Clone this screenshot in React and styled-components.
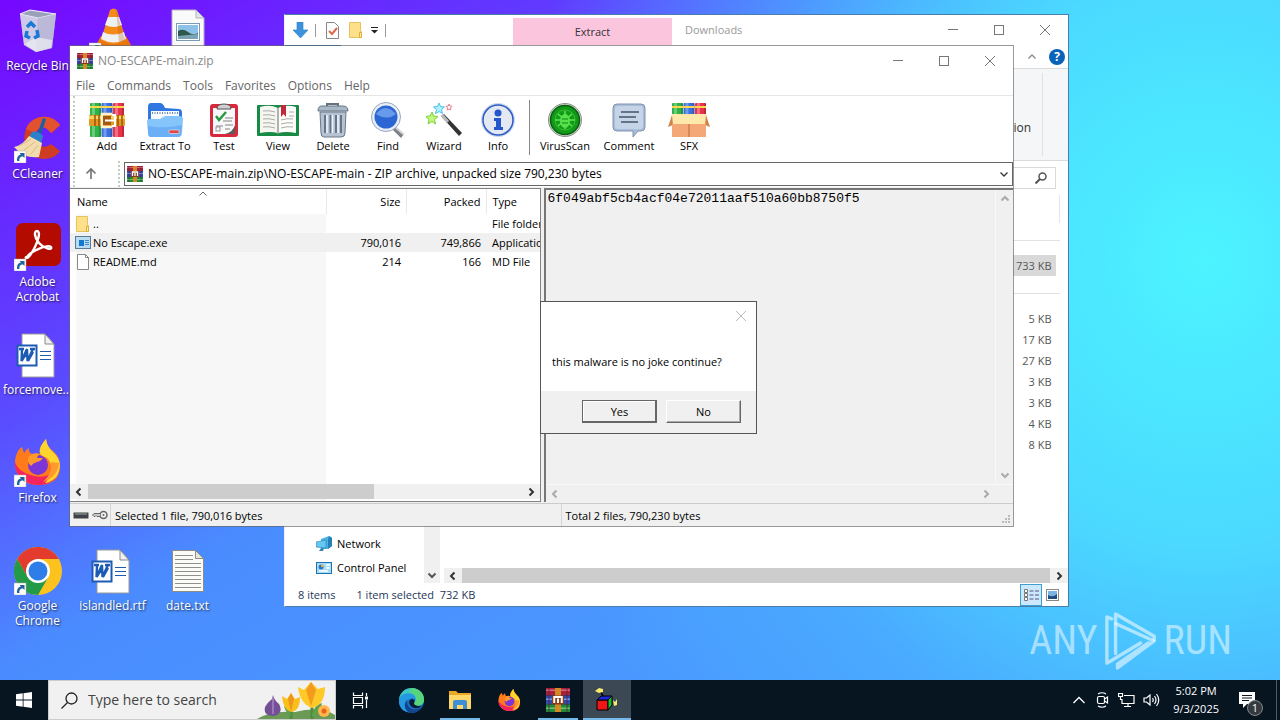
import styled, { createGlobalStyle } from 'styled-components';


const GlobalStyle = createGlobalStyle`
    * {
        box-sizing: border-box;
    }
    body {
        margin: 0;
        font-family: 'Open Sans', 'Noto Sans', sans-serif;
        font-size: 11px;
        line-height: 16px;
        color: #000;
    }
    button, select, input, textarea {
        margin: 0;
        padding: 0;
        border: 0;
        border-radius: 0;
        background: none;
        font: inherit;
        color: inherit;
    }
    svg {
        display: block;
        flex: none;
    }
`

const Screen = styled.div`
    display: flex;
    flex-direction: column;
    min-height: 100vh;
    overflow: hidden;
    background:
        radial-gradient(ellipse 54% 105% at 94% 36%, #4cf4ff 0%, #4bd9ff 38%, #49b4ffaa 68%, #4b90ff00 100%),
        linear-gradient(150deg, #7607ff 0%, #6236ff 20%, #5a4cff 29%, #4a8cff 46%, #4a98ff 70%);
`

const Desktop = styled.main`
    position: relative;
    flex: 1;
    min-height: 680px;
`

/* ---------- desktop shortcuts ---------- */

const Shortcuts = styled.div`
    display: grid;
    grid-template-columns: repeat(3, 75px);
    grid-auto-rows: 108px;
`

const ShortcutBox = styled.button`
    grid-column: ${p => p.$col};
    grid-row: ${p => p.$row};
    display: flex;
    flex-direction: column;
    align-items: center;
    gap: 3px;
    padding-top: 7px;
    color: white;
    font-size: 12px;
    line-height: 15px;
    text-shadow: 1px 1px 2px #000a;
    white-space: nowrap;
    span {
        max-width: 75px;
    }
    .two {
        white-space: normal;
        width: 60px;
    }
`

const Arrow = () => (
    <g>
        <rect x="0" y="36" width="12" height="12" fill="#fff" stroke="#aaa" strokeWidth=".5" />
        <path d="M3 46c0-4 1-6 4-6.500l-1.500-1.500h5v5l-1.500-1.500c-3 0-4 2-3.500 4.500z" fill="#23619f" />
    </g>
)

const Art = ({ children, size = 48, box = 48 }) => (
    <svg width={size} height={size} viewBox={`0 0 ${box} ${box}`} aria-hidden="true">{children}</svg>
)

const RecycleArt = () => (
    <Art>
        <path d="M6 7l10-4 26 4-4 34-16 4-12-7z" fill="#c3c4dc" opacity=".85" />
        <path d="M6 7l10-4 26 4-18 4z" fill="#9aa0b8" stroke="#eef" strokeWidth="1" />
        <path d="M24 11l-2 34-12-7L6 7z" fill="#d8d8ea" opacity=".7" />
        <path d="M24 11l18-4-4 34-16 4z" fill="#bdbcd6" opacity=".8" />
        <path d="M11 37l11-7 16 3-1 8-15 4z" fill="#eeeef4" opacity=".7" />
        <g fill="none" stroke="#1979d6" strokeWidth="3.500">
            <path d="M13 20l4-4 4 4" />
            <path d="M23 23l1 6-4 2" />
            <path d="M16 31l-4-2 1-5" />
        </g>
    </Art>
)

const VlcArt = () => (
    <Art>
        <path d="M6 40l6-11h25l6 11v6H6z" fill="#e8750c" />
        <path d="M21 3q3.500-3 7 0l9 30q-12 8-25 0z" fill="#f58a18" />
        <path d="M19 10h11l3 8q-8 4-17 0z" fill="#eef0f2" />
        <path d="M14 25q10 5 21 0l2 7q-12 7-25 0z" fill="#eef0f2" />
        <path d="M27 2l9 31-6 3z" fill="#a94a00" opacity=".25" />
        <Arrow />
    </Art>
)

const PictureArt = () => (
    <Art>
        <path d="M8 3h24l8 8v37H8z" fill="#fafafa" stroke="#b5b5b5" />
        <path d="M32 3v8h8z" fill="#dfe4e8" stroke="#b5b5b5" />
        <rect x="12.500" y="16.500" width="23" height="17" fill="#fff" stroke="#7a9bb8" />
        <rect x="14" y="18" width="20" height="14" fill="#8cc2e8" />
        <path d="M14 24q5-3 10 1t10 1v6H14z" fill="#31584c" />
        <path d="M14 29l20-2v5H14z" fill="#7aa4b4" />
    </Art>
)

const CCleanerArt = () => (
    <Art>
        <path d="M46 10C38-2 18-1 12 14c-5 14 2 29 17 30 8 0 14-3 17-8l-9-7c-6 5-14 3-15-5-1-7 3-12 9-11 3 0 5 2 7 5z" fill="#cf3c24" />
        <path d="M46 10C38-2 18-1 12 14l9 4c2-5 8-7 12-4l4 4z" fill="#e4512f" />
        <path d="M29 3l3 1-5 16-4-1z" fill="#1c5ea8" />
        <path d="M18 17q6-2 11 4l-2 8-12-7z" fill="#2c81ca" />
        <path d="M15 21l13 7-3 14q-15 2-25-10 9-2 15-11z" fill="#f2dcae" />
        <path d="M5 31l12-7M10 35l11-8M17 39l7-9" stroke="#d2b27a" strokeWidth=".8" />
        <Arrow />
    </Art>
)

const AcrobatArt = () => (
    <Art>
        <rect x="2" y="0" width="45" height="43" rx="7" fill="#b30b00" />
        <path d="M13 34c4-6 21-13 24-10 2 4-8 1-12-4-5-6-5-12-2-12 4 0 1 10-2 16s-7 12-9 11q-1-.500 1-1z" fill="none" stroke="#fff" strokeWidth="2.400" strokeLinejoin="round" />
        <Arrow />
    </Art>
)

const WordArt = () => (
    <Art>
        <path d="M8 3h23l9 10v33H8z" fill="#fff" stroke="#9a9a9a" />
        <path d="M31 3v10h9z" fill="#f0f0f0" stroke="#888" />
        <path d="M26 20.500h11M26 24.500h11M26 28.500h11" stroke="#2059b0" strokeWidth="1" />
        <rect x="3.500" y="14.500" width="19" height="20" fill="#fff" stroke="#1e5bb5" strokeWidth="2" />
        <path d="M5 18h5M8 18l-.500 12 5.500-12 .500 12L19 18M16 18h5M7.500 30l5-8M14 30l5-9" fill="none" stroke="#1d5ab4" strokeWidth="2.400" />
    </Art>
)

const FirefoxShape = () => (
    <g>
        <path d="M24 46C11 46 1 37 1 24 1 17 4 10 8 8l2 6q2-4 5-5-1 4 3 6 4-1 8 0-2-6 4-12 1-3 2-3 1 8 7 12 8 7 7 17-1 17-22 17z" fill="#ff7a1a" />
        <path d="M1 23c-1 12 9 23 23 23 14 0 22-8 22-19-6 7-15 13-26 10C8 34 3 29 1 23z" fill="#f5245e" />
        <path d="M32 0q1 8 7 13c9 8 8 17 4 24-3 4-8 7-12 7 8-8 8-18 3-24-3-3-7-2-8-6-1-6 3-10 6-14z" fill="#ffd52e" />
        <path d="M45 24q-1 14-16 19 10-9 8-20z" fill="#ff9a2e" />
        <circle cx="24" cy="26" r="10" fill="#7a36d8" />
        <path d="M15 17q5-4 11-2-3 2-3 4h6q-2 3-6 4-4 1-6 4-5-5-2-10z" fill="#ff9a2a" />
    </g>
)

const FirefoxArt = () => <Art><FirefoxShape /><Arrow /></Art>

const ChromeArt = () => (
    <Art>
        <circle cx="24" cy="24" r="24" fill="#fcc31e" />
        <path d="M3.200 12A24 24 0 0 1 44.800 12H24L13.600 30z" fill="#e33b2e" />
        <path d="M3.200 12A24 24 0 0 0 24 48L34.400 30 24 36 13.600 30z" fill="#229a48" />
        <circle cx="24" cy="24" r="12" fill="#fff" />
        <circle cx="24" cy="24" r="9.500" fill="#2f7de9" />
        <Arrow />
    </Art>
)

const TextArt = () => (
    <Art>
        <path d="M8.500 3.500h23l8 8v33h-31z" fill="#fbfbf8" stroke="#8e8e80" />
        <path d="M31.500 3.500v8h8z" fill="#e6e6e0" stroke="#8e8e80" />
        <path d="M11 8.500h18M11 12.500h18M11 16.500h26M11 20.500h26M11 24.500h26M11 28.500h26M11 32.500h26M11 36.500h26M11 40.500h26" stroke="#8f8f8f" strokeWidth="1" />
    </Art>
)

const shortcuts = [
    { col: 1, row: 1, label: 'Recycle Bin', art: RecycleArt },
    { col: 2, row: 1, label: '', art: VlcArt },
    { col: 3, row: 1, label: '', art: PictureArt },
    { col: 1, row: 2, label: 'CCleaner', art: CCleanerArt },
    { col: 1, row: 3, label: 'Adobe Acrobat', art: AcrobatArt, two: true },
    { col: 1, row: 4, label: 'forcemove...', art: WordArt },
    { col: 1, row: 5, label: 'Firefox', art: FirefoxArt },
    { col: 1, row: 6, label: 'Google Chrome', art: ChromeArt, two: true },
    { col: 2, row: 6, label: 'islandled.rtf', art: WordArt },
    { col: 3, row: 6, label: 'date.txt', art: TextArt },
]

/* ---------- small shared parts ---------- */

const RarIcon = ({ size = 16 }) => (
    <svg width={size} height={size} viewBox="0 0 16 16" aria-hidden="true">
        <rect y="0" width="16" height="5" fill="#a8203c" />
        <rect y="1" width="16" height="1" fill="#d8687c" />
        <rect y="5" width="16" height="6" fill="#2c4cb0" />
        <rect y="7" width="16" height="1" fill="#7c98e4" />
        <rect y="11" width="16" height="5" fill="#1f8a3a" />
        <rect y="13" width="16" height="1" fill="#6cc46c" />
        <path d="M2 0v16M14 0v16" stroke="#5a2030" strokeWidth="1" opacity=".5" />
        <rect x="6" y="0" width="4" height="16" fill="#d48a24" />
        <rect x="4" y="5" width="8" height="6" fill="#8a3c14" />
        <path d="M5.500 10V6h5v4M8 7v3" fill="none" stroke="#fff" strokeWidth="1.300" />
    </svg>
)

const FolderIcon = () => (
    <svg width="16" height="16" viewBox="0 0 16 16" aria-hidden="true">
        <path d="M1.500.500h11v9h1v6h-12z" fill="#ffe08a" stroke="#e6c15c" />
        <path d="M11.500 10.500h2v5h-2z" fill="#ffeaa8" stroke="#dcae3c" />
    </svg>
)

const Chevron = ({ dir = 'down', color = '#333', width = 2 }) => {
    const turn = { down: 0, left: 90, up: 180, right: 270 }[dir]
    return (
        <svg width="10" height="10" viewBox="0 0 10 10" aria-hidden="true">
            <path d="M1.500 3.500L5 7l3.500-3.500" fill="none" stroke={color} strokeWidth={width} transform={`rotate(${turn} 5 5)`} />
        </svg>
    )
}

const Controls = styled.div`
    display: flex;
    margin-left: auto;
    button {
        display: flex;
        align-items: center;
        justify-content: center;
        width: 46px;
        height: 28px;
    }
`

const WindowControls = () => (
    <Controls>
        <button aria-label="Minimize">
            <svg width="12" height="12"><path d="M1 5.500h10" stroke="#777" /></svg>
        </button>
        <button aria-label="Maximize">
            <svg width="12" height="12"><rect x="1.500" y="1.500" width="9" height="9" fill="none" stroke="#777" /></svg>
        </button>
        <button aria-label="Close">
            <svg width="12" height="12"><path d="M1 1l10 10M11 1L1 11" stroke="#777" /></svg>
        </button>
    </Controls>
)

const ScrollRow = styled.div`
    display: flex;
    height: ${p => p.$h || 15}px;
    background: #f0f0f0;
    button {
        display: flex;
        align-items: center;
        justify-content: center;
        width: 18px;
    }
    .thumb {
        background: #cdcdcd;
        width: ${p => p.$thumb || '0'};
    }
    button:last-child {
        margin-left: auto;
    }
`

/* ---------- explorer window ---------- */

const Explorer = styled.section`
    position: absolute;
    top: 14px;
    left: 284px;
    right: 211px;
    background: white;
    border: 1px solid #4b7dab;
    border-left-color: #eef;
`

const ExplorerTitle = styled.header`
    display: flex;
    align-items: center;
    height: 30px;
    padding-left: 7px;
    .bar {
        width: 1px;
        height: 13px;
        background: #999;
    }
    .quick {
        display: flex;
        align-items: center;
        gap: 6px;
        width: 221px;
    }
    .extract {
        align-self: flex-end;
        width: 159px;
        height: 27px;
        background: #fcc5de;
        color: #333;
    }
    h2 {
        margin: 0 0 0 13px;
        font-size: 11px;
        font-weight: 400;
        color: #999;
    }
`

const TabRow = styled.div`
    display: flex;
    align-items: center;
    gap: 12px;
    height: 24px;
    padding-right: 3px;
    border-bottom: 1px solid #dadbdc;
    .file {
        align-self: stretch;
        width: 56px;
        background: #1979ca;
    }
    .help {
        width: 16px;
        height: 16px;
        border-radius: 50%;
        background: #0a63b8;
        color: white;
        font-size: 12px;
        font-weight: 700;
        line-height: 16px;
    }
    .fold {
        margin-left: auto;
    }
`

const Ribbon = styled.div`
    display: flex;
    align-items: center;
    justify-content: flex-end;
    gap: 11px;
    height: 92px;
    padding: 4px 25px 4px 0;
    background: #f5f6f7;
    border-bottom: 1px solid #dadbdc;
    .bar {
        align-self: stretch;
        width: 1px;
        background: #e0e1e2;
    }
    button {
        margin-top: 26px;
        color: #333;
        font-size: 12px;
    }
`

const SearchRow = styled.div`
    display: flex;
    justify-content: flex-end;
    padding: 6px 12px;
    label {
        display: flex;
        align-items: center;
        width: 210px;
        height: 22px;
        padding-right: 8px;
        border: 1px solid #d9d9d9;
    }
    input {
        flex: 1;
        min-width: 0;
    }
`

const ExplorerBody = styled.div`
    display: flex;
    height: 388px;
`

const Tree = styled.nav`
    display: flex;
    flex-direction: column;
    justify-content: flex-end;
    width: 139px;
    padding: 0 0 3px 31px;
    a {
        display: flex;
        align-items: center;
        gap: 5px;
        height: 24px;
        color: #000;
        text-decoration: none;
    }
`

const TreeScroll = styled.div`
    display: flex;
    align-items: flex-end;
    justify-content: center;
    width: 16px;
    padding-bottom: 3px;
    background: #f0f0f0;
`

const Files = styled.div`
    display: flex;
    flex: 1;
    flex-direction: column;
    justify-content: space-between;
    margin-left: 4px;
    min-width: 0;
    table {
        width: calc(100% - 8px);
        border-collapse: collapse;
        color: #555;
    }
    th, td {
        height: 21px;
        padding: 0 8px 0 0;
        text-align: right;
        font-weight: 400;
    }
    th {
        height: 28px;
        border-right: 1px solid #e5e5e5;
    }
    .picked td {
        background: linear-gradient(#d9d9d9, #d9d9d9) 0 0 / calc(100% - 4px) 100% no-repeat;
    }
    .group td {
        height: 32px;
        background: linear-gradient(#e2e2e2, #e2e2e2) 0 17px / 100% 1px no-repeat;
    }
`

const ExplorerStatus = styled.footer`
    display: flex;
    align-items: center;
    gap: 21px;
    height: 23px;
    padding-left: 13px;
    color: #1e395b;
    .views {
        display: flex;
        margin-left: auto;
        padding-right: 4px;
    }
    .views button {
        display: flex;
        align-items: center;
        justify-content: center;
        width: 22px;
        height: 22px;
    }
    .views .on {
        background: #cce8ff;
        border: 1px solid #3c9fd0;
    }
`

const groups = [['733 KB'], ['5 KB', '17 KB', '27 KB', '3 KB', '3 KB', '4 KB', '8 KB']]

const ExplorerWindow = () => (
    <Explorer aria-label="Downloads">
        <ExplorerTitle>
            <div className="quick">
                <svg width="17" height="17" viewBox="0 0 17 17"><path d="M5 0h6v8h5l-7.500 8L1 8h4z" fill="#3c93dc" stroke="#2d7dc4" strokeWidth=".6" /></svg>
                <span className="bar" />
                <svg width="20" height="17" viewBox="0 0 20 17">
                    <path d="M4.500.500h8l4 4v12h-12z" fill="#fdfdfd" stroke="#888" />
                    <path d="M7 9l3 3 5-6" fill="none" stroke="#e06848" strokeWidth="2" />
                </svg>
                <FolderIcon />
                <svg width="9" height="9" viewBox="0 0 9 9"><path d="M1 1.500h7" stroke="#222" /><path d="M1 4h7L4.500 7.500z" fill="#222" /></svg>
                <span className="bar" />
            </div>
            <button className="extract">Extract</button>
            <h2>Downloads</h2>
            <WindowControls />
        </ExplorerTitle>
        <TabRow>
            <span className="file" />
            <button className="fold" aria-label="Collapse ribbon"><Chevron dir="up" color="#888" width={1.3} /></button>
            <button className="help" aria-label="Help">?</button>
        </TabRow>
        <Ribbon>
            <button>Extraction</button>
            <span className="bar" />
        </Ribbon>
        <SearchRow>
            <label>
                <input aria-label="Search Downloads" />
                <svg width="12" height="12" viewBox="0 0 12 12"><circle cx="7.500" cy="4.500" r="3.500" fill="none" stroke="#555" strokeWidth="1.500" /><path d="M5 7L.500 11.500" stroke="#555" strokeWidth="2" /></svg>
            </label>
        </SearchRow>
        <ExplorerBody>
            <Tree>
                <a href="#network">
                    <svg width="16" height="16" viewBox="0 0 16 16"><path d="M5 3l8-3 3 2v8l-4 3H5z" fill="#48b4e4" /><path d="M13 0l3 2v8l-4 3V4z" fill="#2580b4" /><path d="M0 6l10-2v8L0 11z" fill="#66c8f2" stroke="#2a7cac" strokeWidth=".6" /><path d="M5 12l3 .500-1 2.500H3z" fill="#3484b8" /></svg>
                    Network
                </a>
                <a href="#control-panel">
                    <svg width="16" height="16" viewBox="0 0 16 16"><rect x=".5" y="2.500" width="15" height="11" fill="#a4dcf6" stroke="#1e74b4" /><circle cx="5" cy="7" r="2.500" fill="#2a78c4" /><path d="M5 7V4.500A2.500 2.500 0 0 1 7.500 7z" fill="#f0a83c" /><path d="M10 5h4M10 8h4M3 11h9" stroke="#fff" strokeWidth="1.500" /></svg>
                    Control Panel
                </a>
            </Tree>
            <TreeScroll><Chevron color="#555" /></TreeScroll>
            <Files>
                <table>
                    <thead><tr><th aria-label="Size" /></tr></thead>
                    {groups.map((sizes, i) => (
                        <tbody key={i}>
                            <tr className="group"><td /></tr>
                            {sizes.map((size, n) => (
                                <tr key={n} className={i === 0 ? 'picked' : ''}><td>{size}</td></tr>
                            ))}
                        </tbody>
                    ))}
                </table>
                <ScrollRow $thumb="calc(100% - 36px)">
                    <button aria-label="Scroll left"><Chevron dir="left" /></button>
                    <div className="thumb" />
                    <button aria-label="Scroll right"><Chevron dir="right" /></button>
                </ScrollRow>
            </Files>
        </ExplorerBody>
        <ExplorerStatus>
            <span>8 items</span>
            <span>1 item selected&nbsp; 732 KB</span>
            <div className="views">
                <button className="on" aria-label="Details view">
                    <svg width="16" height="14" viewBox="0 0 16 14"><path d="M1.500 1.500h3v3h-3zM1.500 5.500h3v3h-3zM1.500 9.500h3v3h-3z" fill="#fff" stroke="#777" /><path d="M6.500 3h4M6.500 7h4M6.500 11h4M12 3h4M12 7h4M12 11h4" stroke="#557" /></svg>
                </button>
                <button aria-label="Large icons view">
                    <svg width="14" height="12" viewBox="0 0 14 12"><rect x=".5" y=".5" width="12" height="11" fill="#fff" stroke="#888" /><path d="M2 2h9v8H2z" fill="#7ab2e4" /><path d="M2 6q5 3 9-1v5H2z" fill="#224c7c" /></svg>
                </button>
            </div>
        </ExplorerStatus>
    </Explorer>
)

/* ---------- archive window ---------- */

const Archive = styled.section`
    position: absolute;
    top: 45px;
    left: 69px;
    right: 266px;
    background: #fff padding-box;
    border: 1px solid #666a;
`

const ArchiveTitle = styled.header`
    display: flex;
    align-items: center;
    height: 29px;
    padding-left: 7px;
    h1 {
        margin: 0 0 0 5px;
        font-size: 12px;
        font-weight: 400;
        color: #888;
    }
`

const MenuBar = styled.nav`
    display: flex;
    align-items: center;
    gap: 12px;
    height: 21px;
    padding: 1px 0 0 6px;
    border-bottom: 1px solid #e6e6e6;
    color: #666;
    font-size: 12px;
`

const Bars = styled.div`
    margin-left: 3px;
    padding-left: 9px;
    border-left: 2px dotted #bcd0bc;
`

const Toolbar = styled.div`
    display: flex;
    height: 65px;
    .bar {
        width: 1px;
        height: 55px;
        margin: 4px 3px;
        background: #888;
    }
`

const Tool = styled.button`
    display: flex;
    flex-direction: column;
    align-items: center;
    width: ${p => p.$w}px;
    padding-top: 6px;
    white-space: nowrap;
`

const AddressRow = styled.div`
    display: flex;
    align-items: center;
    height: 26px;
    .up {
        display: flex;
        width: 34px;
    }
    .grip {
        align-self: stretch;
        width: 6px;
        border-left: 2px dotted #bcd0bc;
    }
`

const Combo = styled.label`
    display: flex;
    flex: 1;
    align-items: center;
    gap: 5px;
    height: 24px;
    padding: 0 3px 0 2px;
    border: 1px solid #666;
    font-size: 12px;
    select {
        flex: 1;
        min-width: 0;
        appearance: none;
        outline: 0;
    }
`

const Panes = styled.div`
    display: flex;
    gap: 3px;
    height: 316px;
    padding: 1px 0;
    background: #f0f0f0;
`

const ListPane = styled.div`
    display: flex;
    flex-direction: column;
    justify-content: space-between;
    width: calc(50% - 1px);
    padding-bottom: 2px;
    overflow: hidden;
    border: 1px solid #828282;
    border-left: 0;
    background: linear-gradient(#f7f7f7, #f7f7f7) 6px 25px / 250px 100% no-repeat white;
`

const FileTable = styled.table`
    width: 100%;
    table-layout: fixed;
    border-collapse: collapse;
    white-space: nowrap;
    th, td {
        height: 19px;
        padding: 0 5px;
        font-weight: 400;
        text-align: right;
        overflow: hidden;
    }
    th {
        position: relative;
        height: 25px;
        background: white;
        border-right: 1px solid #e9e9e9;
    }
    th svg {
        position: absolute;
        top: 0;
        left: 50%;
    }
    th:first-child {
        width: 256px;
        padding-left: 7px;
        text-align: left;
    }
    td:first-child {
        padding-left: 5px;
        text-align: left;
    }
    th:nth-child(2), th:nth-child(3) {
        width: 80px;
    }
    th:last-child, td:last-child {
        padding: 0 0 0 6px;
        text-align: left;
        border-right: 0;
    }
    .picked {
        background: #f0f0f0;
    }
    td div {
        display: flex;
        align-items: center;
        gap: 2px;
    }
`

const CommentPane = styled.div`
    display: flex;
    flex: 1;
    flex-direction: column;
    min-width: 0;
    border-top: 2px solid #777;
    border-left: 2px solid #777;
    .top {
        display: flex;
        flex: 1;
    }
    textarea {
        flex: 1;
        min-width: 0;
        padding: 1px 2px;
        resize: none;
        outline: 0;
        font-family: 'Liberation Mono', 'Courier New', monospace;
        font-size: 13px;
        overflow: hidden;
    }
    .side {
        display: flex;
        flex-direction: column;
        align-items: center;
        justify-content: space-between;
        width: 18px;
        padding: 4px 0;
        border-left: 1px solid #f8f8f8;
    }
    .foot {
        padding-right: 18px;
        border-top: 1px solid #f8f8f8;
    }
`

const ArchiveStatus = styled.footer`
    display: grid;
    grid-template-columns: 40px calc(50% - 21px) 1fr 12px;
    align-items: center;
    height: 23px;
    border-top: 1px solid #ccc;
    background: #f0f0f0;
    .icons {
        display: flex;
        gap: 3px;
        padding-left: 3px;
    }
    .cell {
        padding: 4px 4px 2px;
        border-left: 1px solid #d6d6d6;
    }
`

const Big = ({ w = 36, children }) => (
    <svg width={w} height="36" viewBox={`0 0 ${w} 36`} aria-hidden="true">{children}</svg>
)

const Books = ({ colors = ['#2fb344', '#3a6fe0', '#e8324c'] }) => (
    <g>
        {colors.map((c, i) => (
            <g key={c} transform={`translate(${1 + i * 11.5} 1)`}>
                <rect width="11" height="34" rx="1" fill={c} />
                <rect x="2" width="3" height="34" fill="#fff" opacity=".3" />
                <rect x="9" width="2" height="34" fill="#000" opacity=".18" />
                <rect y="3" width="11" height="2" fill="#ffd84a" />
            </g>
        ))}
    </g>
)

const tools = [
    { w: 46, label: 'Add', art: (
        <Big>
            <Books />
            <rect x="0" y="13" width="36" height="11" rx="1" fill="#e29a20" />
            <rect x="0" y="14" width="36" height="3" fill="#ffd264" />
            <path d="M6 13v11M10 13v11M29 13v11M33 13v11" stroke="#9a5408" strokeWidth="1.500" />
            <path d="M23 12H13v13h10" fill="none" stroke="#fff2d0" strokeWidth="2.500" />
            <rect x="14" y="14" width="8" height="9" fill="#a25a10" />
            <path d="M16 18.500h11M23 13h3v11h-3" fill="none" stroke="#fff" strokeWidth="2" />
        </Big>
    ) },
    { w: 70, label: 'Extract To', art: (
        <Big>
            <path d="M1 5q0-4 3-4h9q3 0 5 5l14 1q3 0 3 4v14H1z" fill="#2f76e0" />
            <path d="M4 9h28v14H4z" fill="#f8fbff" />
            <path d="M5 11h26" stroke="#7088a8" strokeDasharray="1 1.500" strokeWidth="2" />
            <path d="M0 20q0-3 3-3h10l5-3h14q4 0 4 3l-1 14q0 4-4 4H4q-3 0-3-4z" fill="#86c4fc" />
            <path d="M1 24q16 3 34-1l-1 8q0 4-3 4H4q-3 0-3-4z" fill="#5fa8f4" opacity=".7" />
            <rect x="22" y="28" width="10" height="3.500" rx="1" fill="#e04848" stroke="#fff" strokeWidth=".5" />
        </Big>
    ) },
    { w: 48, label: 'Test', art: (
        <Big>
            <rect x="4" y="2" width="28" height="33" rx="3" fill="#d8283c" />
            <rect x="7" y="6" width="22" height="26" fill="#f8f8fa" />
            <path d="M11 7q0-5 7-5t7 5z" fill="#d0d0d4" stroke="#555" />
            <path d="M10 14l3 4 7-8" fill="none" stroke="#2a9a40" strokeWidth="2.500" />
            <path d="M19 16h8M17 19h9M10 24h7M19 23h8M19 27h5" stroke="#aaa" strokeWidth="1.500" />
            <rect x="10" y="25" width="4" height="4" fill="none" stroke="#999" />
            <path d="M29 23v9H19q8-2 10-9z" fill="#333" opacity=".8" />
        </Big>
    ) },
    { w: 60, label: 'View', art: (
        <Big w={42}>
            <rect x="0" y="3" width="42" height="31" rx="1" fill="#178a44" />
            <path d="M3 5q10-3 18 1v25q-8-2-18 0z" fill="#f6f6f0" />
            <path d="M39 5q-10-3-18 1v25q8-2 18 0z" fill="#fdfdfa" />
            <path d="M21 6v26" stroke="#999" strokeWidth="1.500" />
            <path d="M6 9q6-1 12 1M6 13q6-1 12 1M6 17q6-1 12 1M6 21q6-1 12 1M6 25q6-1 12 1M24 18q6-2 12-1M24 22q6-2 12-1M24 26q6-2 12-1M32 10h5M32 14h5" fill="none" stroke="#aaa" strokeWidth="1" />
            <path d="M24 3h5v12l-2.500-3-2.500 3z" fill="#c4283a" />
        </Big>
    ) },
    { w: 50, label: 'Delete', art: (
        <Big>
            <path d="M12 2h11v3H12z" fill="none" stroke="#66727e" strokeWidth="2" />
            <path d="M3 9q0-5 4-5h21q5 0 5 5z" fill="#a9b8c8" stroke="#657584" />
            <path d="M5 10h26l-1 21q0 4-4 4H9q-3 0-3-4z" fill="#b4c2d2" stroke="#6a7886" />
            <path d="M10 13v18M15.500 13v18M21 13v18M26 13v18" stroke="#667688" strokeWidth="2" />
            <path d="M12 13v18M17.500 13v18M23 13v18" stroke="#eef4fa" strokeWidth="1.500" />
        </Big>
    ) },
    { w: 60, label: 'Find', art: (
        <Big>
            <path d="M25 24l9 8-3 4-9-9z" fill="#7c8088" />
            <path d="M26 26l8 7" stroke="#ddd" strokeWidth="1.500" />
            <circle cx="16" cy="15" r="14.500" fill="#e8eef6" stroke="#97a7bc" />
            <circle cx="16" cy="15" r="11.500" fill="#2c66d4" />
            <path d="M6 12q9-12 20 0-9 7-20 0z" fill="#7cacf4" opacity=".75" />
        </Big>
    ) },
    { w: 52, label: 'Wizard', art: (
        <Big>
            <path d="M15 14l3-2 18 19-3 3z" fill="#333" />
            <path d="M16 13l6 7" stroke="#bbb" strokeWidth="3" />
            <path d="M13 1l1.500 3.500 4 .500-3 2.500 1 4-3.500-2-3.500 2 1-4-3-2.500 4-.500z" fill="#aef0ff" stroke="#48c4e8" />
            <path d="M6 10l1.500 4 4.500.500-3.500 3 1 4.500L6 19.500 2 22l1-4.500-3.500-3 4.500-.500z" fill="#c0f87c" stroke="#7cd03c" />
            <path d="M23 2l.8 2 2.200.300-1.500 1.500.300 2.200-1.800-1-1.800 1 .300-2.200L20 4.300l2.200-.300z" fill="#fff" stroke="#f07c88" />
        </Big>
    ) },
    { w: 56, label: 'Info', art: (
        <Big>
            <circle cx="18" cy="18" r="17" fill="#c9d8f0" />
            <circle cx="18" cy="18" r="15" fill="#e4e8f2" stroke="#2e5cc4" strokeWidth="1.500" />
            <circle cx="18" cy="11" r="3.500" fill="#2456cc" />
            <path d="M14 16h7v9h2v3h-9v-3h2v-6h-2z" fill="#2456cc" />
        </Big>
    ) },
    { bar: true },
    { w: 64, label: 'VirusScan', art: (
        <Big>
            <circle cx="18" cy="18" r="16.500" fill="#cfd8cc" stroke="#889484" />
            <circle cx="18" cy="18" r="14.500" fill="#119a18" stroke="#0a5c10" strokeWidth="1.500" />
            <path d="M18 9v18M11 12l14 12M25 12L11 24M8 18h20" stroke="#5de84c" strokeWidth="1.500" />
            <ellipse cx="18" cy="19" rx="5" ry="7" fill="#58e04c" />
            <circle cx="18" cy="18" r="10" fill="none" stroke="#4cd040" strokeWidth="1" opacity=".7" />
            <path d="M15 17h6M15 21h6" stroke="#0f8418" />
        </Big>
    ) },
    { w: 64, label: 'Comment', art: (
        <Big>
            <path d="M6 2h24q4 0 4 4v19q0 4-4 4h-3l-5 6v-6H6q-4 0-4-4V6q0-4 4-4z" fill="#a9bcd8" stroke="#8093b0" />
            <rect x="4" y="4" width="28" height="23" rx="3" fill="#c6d4e8" />
            <path d="M10 10h18M8 15h17M10 20h17" stroke="#46546c" strokeWidth="1.500" />
        </Big>
    ) },
    { w: 56, label: 'SFX', art: (
        <Big w={42}>
            <g transform="translate(3 0)"><Books /></g>
            <path d="M4 13h34v21H4z" fill="#eda468" />
            <path d="M4 12h34l2 10H2z" fill="#ffe8ac" />
            <path d="M4 13L0 25l5-2zM38 13l4 12-5-2z" fill="#cf8548" />
            <path d="M4 22h34v13H4z" fill="#f4a878" />
            <path d="M21 22v13" stroke="#b8683c" />
        </Big>
    ) },
]

const FileIcon = () => (
    <svg width="16" height="18" viewBox="0 0 16 18" aria-hidden="true">
        <path d="M2.500 1.500h8l3 3v12h-11z" fill="#fff" stroke="#888" />
        <path d="M10.500 1.500v3h3" fill="none" stroke="#888" />
    </svg>
)

const ExeIcon = () => (
    <svg width="16" height="13" viewBox="0 0 16 13" aria-hidden="true">
        <rect x=".5" y=".5" width="15" height="12" fill="#b8dcf2" stroke="#5a7c98" />
        <rect x="4" y="4" width="5" height="6" fill="#1478d0" />
        <path d="M10 4.500h4M10 6.500h4M10 8.500h4" stroke="#3c88c8" />
    </svg>
)

const files = [
    { name: '..', size: '', packed: '', type: 'File folder', icon: <FolderIcon /> },
    { name: 'No Escape.exe', size: '790,016', packed: '749,866', type: 'Application', icon: <ExeIcon />, picked: true },
    { name: 'README.md', size: '214', packed: '166', type: 'MD File', icon: <FileIcon /> },
]

const ArchiveWindow = () => (
    <Archive aria-label="NO-ESCAPE-main.zip">
        <ArchiveTitle>
            <RarIcon />
            <h1>NO-ESCAPE-main.zip</h1>
            <WindowControls />
        </ArchiveTitle>
        <MenuBar>
            {['File', 'Commands', 'Tools', 'Favorites', 'Options', 'Help'].map(m => <button key={m}>{m}</button>)}
        </MenuBar>
        <Bars>
            <Toolbar>
                {tools.map((t, i) => t.bar
                    ? <span key={i} className="bar" />
                    : <Tool key={i} $w={t.w}>{t.art}{t.label}</Tool>)}
            </Toolbar>
            <AddressRow>
                <button className="up" aria-label="Up one level">
                    <svg width="14" height="14" viewBox="0 0 14 14"><path d="M7 12V2M2.500 6.500L7 2l4.500 4.500" fill="none" stroke="#777" strokeWidth="1.700" /></svg>
                </button>
                <span className="grip" />
                <Combo>
                    <RarIcon />
                    <select aria-label="Archive path">
                        <option>NO-ESCAPE-main.zip\NO-ESCAPE-main - ZIP archive, unpacked size 790,230 bytes</option>
                    </select>
                    <Chevron width={1.3} />
                </Combo>
            </AddressRow>
        </Bars>
        <Panes>
            <ListPane>
                <FileTable>
                    <thead>
                        <tr>
                            <th>Name<Chevron dir="up" color="#666" width={1} /></th>
                            <th>Size</th>
                            <th>Packed</th>
                            <th>Type</th>
                        </tr>
                    </thead>
                    <tbody>
                        {files.map(f => (
                            <tr key={f.name} className={f.picked ? 'picked' : ''}>
                                <td><div>{f.icon}{f.name}</div></td>
                                <td>{f.size}</td>
                                <td>{f.packed}</td>
                                <td>{f.type}</td>
                            </tr>
                        ))}
                    </tbody>
                </FileTable>
                <ScrollRow $thumb="61%">
                    <button aria-label="Scroll left"><Chevron dir="left" /></button>
                    <div className="thumb" />
                    <button aria-label="Scroll right"><Chevron dir="right" /></button>
                </ScrollRow>
            </ListPane>
            <CommentPane>
                <div className="top">
                    <textarea readOnly aria-label="Archive comment" value="6f049abf5cb4acf04e72011aaf510a60bb8750f5" />
                    <div className="side">
                        <Chevron dir="up" color="#aaa" />
                        <Chevron color="#aaa" />
                    </div>
                </div>
                <ScrollRow className="foot" $h={18}>
                    <button aria-label="Scroll left"><Chevron dir="left" color="#aaa" /></button>
                    <button aria-label="Scroll right"><Chevron dir="right" color="#aaa" /></button>
                </ScrollRow>
            </CommentPane>
        </Panes>
        <ArchiveStatus>
            <div className="icons">
                <svg width="16" height="10" viewBox="0 0 16 10"><rect x=".5" y="2.500" width="15" height="6" rx="1" fill="#3c4248" stroke="#999" /><path d="M2 4h12" stroke="#9aa" /></svg>
                <svg width="16" height="10" viewBox="0 0 16 10"><circle cx="11.500" cy="5" r="3.500" fill="none" stroke="#666" strokeWidth="1.500" /><circle cx="11.500" cy="5" r="1" fill="#666" /><path d="M8 3.500H2L.500 5l1.500 1.500h1l1-1 1 1h3" fill="#ccc" stroke="#666" /></svg>
            </div>
            <div className="cell">Selected 1 file, 790,016 bytes</div>
            <div className="cell">Total 2 files, 790,230 bytes</div>
            <svg width="10" height="20" viewBox="0 0 10 20"><path d="M7 10h2v2H7zM4 13h2v2H4zM7 13h2v2H7zM1 16h2v2H1zM4 16h2v2H4zM7 16h2v2H7z" fill="#bbb" /></svg>
        </ArchiveStatus>
    </Archive>
)

/* ---------- message box ---------- */

const Dialog = styled.div`
    position: absolute;
    top: 301px;
    left: 540px;
    width: 217px;
    background: white;
    border: 1px solid #555;
    .head {
        display: flex;
        justify-content: flex-end;
        padding: 9px 10px 0 0;
    }
    p {
        margin: 0;
        padding: 33px 10px 21px 11px;
        white-space: nowrap;
    }
`

const DialogButtons = styled.div`
    display: flex;
    justify-content: flex-end;
    gap: 9px;
    padding: 9px 15px 10px;
    background: #f0f0f0;
`

const DialogButton = styled.button`
    width: 75px;
    height: 23px;
    background: #f0f0f0;
    border: 1px solid;
    border-color: ${p => p.$main ? '#666' : '#fff #666 #666 #fff'};
    box-shadow: ${p => p.$main ? 'inset -1px -1px #666, inset 1px 1px #fff' : 'inset -1px -1px #aaa'};
`

const MessageBox = () => (
    <Dialog role="dialog" aria-label="Warning">
        <div className="head">
            <button aria-label="Close">
                <svg width="10" height="10"><path d="M0 0l10 10M10 0L0 10" stroke="#bbb" /></svg>
            </button>
        </div>
        <p>this malware is no joke continue?</p>
        <DialogButtons>
            <DialogButton $main>Yes</DialogButton>
            <DialogButton>No</DialogButton>
        </DialogButtons>
    </Dialog>
)

/* ---------- watermark ---------- */

const Watermark = styled.div`
    position: absolute;
    right: 48px;
    bottom: 8px;
    display: flex;
    align-items: center;
    gap: 6px;
    color: #dff4ffa0;
    font-family: 'Roboto Condensed', 'Liberation Sans Narrow', Roboto, sans-serif;
    font-size: 40px;
    font-weight: 400;
    line-height: 62px;
`

const AnyRun = () => (
    <Watermark>
        ANY
        <svg width="54" height="62" viewBox="0 0 56 62" aria-hidden="true">
            <g fill="none" stroke="#e4f6ff" strokeOpacity=".65" strokeWidth="3.500" strokeLinejoin="round" strokeLinecap="round">
                <path d="M8 8L3 6v48l35-21" />
                <path d="M12 44V3l40 23v4" />
                <path d="M12 13l40 18-38 28v-4l32-22" />
            </g>
        </svg>
        RUN
    </Watermark>
)

/* ---------- taskbar ---------- */

const Taskbar = styled.footer`
    display: flex;
    height: 40px;
    background: #071521;
    color: white;
`

const TaskButton = styled.button`
    display: flex;
    align-items: center;
    justify-content: center;
    width: 48px;
    margin-right: 1px;
    background: ${p => p.$active ? '#3c4954' : 'none'};
    box-shadow: ${p => p.$active ? 'inset 0 -2px #76b9ed' : 'none'};
    &.start {
        margin: 0;
    }
    &.view {
        margin-right: 3px;
    }
    &.open {
        background: linear-gradient(#76b9ed, #76b9ed) 50% 100% / 40px 2px no-repeat;
    }
`

const SearchBox = styled.label`
    display: flex;
    align-items: center;
    gap: 10px;
    width: 288px;
    padding-left: 12px;
    background: #f1f1f1;
    border: 1px solid #ccc;
    color: #333;
    input {
        flex: 1;
        min-width: 0;
        outline: 0;
        font-size: 14px;
    }
    input::placeholder {
        color: #444;
        opacity: 1;
    }
`

const Tray = styled.div`
    display: flex;
    align-items: center;
    gap: 8px;
    margin-left: auto;
    padding-right: 3px;
    button {
        display: flex;
    }
    time {
        margin-left: 5px;
        line-height: 18px;
        text-align: center;
    }
    .notes {
        margin: 0 13px 0 12px;
    }
    .edge {
        width: 1px;
        height: 40px;
        background: #556;
    }
`

const Note = styled.button`
    position: relative;
    span {
        position: absolute;
        top: 9px;
        left: 8px;
        width: 16px;
        height: 16px;
        border: 1px solid #888;
        border-radius: 50%;
        background: #333a40;
        line-height: 14px;
    }
`

const Flowers = () => (
    <svg width="78" height="38" viewBox="0 0 78 38" aria-hidden="true">
        <path d="M0 38q14-9 38-7 26-6 40 3v4z" fill="#6b9a56" />
        <path d="M16 14q1 5 6 9 5 9-5 12-11 0-9-9 3-5 7-8z" fill="#735096" />
        <path d="M16 16v17" stroke="#a884c4" strokeWidth="1.500" />
        <path d="M34 22v16M55 20v18" stroke="#4e8c3c" strokeWidth="3" />
        <path d="M55 34q2-10 10-12-1 10-10 14zM34 36q-6-6-7-11 7 2 7 11z" fill="#5fa04a" />
        <path d="M25 15l5 3 4-6 4 6 5-2q0 14-9 15-8-2-9-16z" fill="#fbbf1c" />
        <path d="M34 12l3 6-3 13-3-13z" fill="#ef951c" />
        <path d="M41 6l6 3 7-8 7 7 7-2q0 18-13 21Q43 23 41 6z" fill="#ffc928" />
        <path d="M54 1l5 8-5 16-5-16z" fill="#f39b1c" />
        <circle cx="67" cy="30" r="6" fill="#ffb74c" />
        <circle cx="67" cy="30" r="2.500" fill="#e8621c" />
    </svg>
)

const TaskbarRow = () => (
    <Taskbar>
        <TaskButton className="start" aria-label="Start">
            <svg width="16" height="16" viewBox="0 0 16 16"><path d="M0 2.200L6.700 1.300v6.300H0zM7.500 1.200L16 0v7.600H7.500zM0 8.400h6.700v6.300L0 13.800zM7.500 8.400H16V16l-8.500-1.200z" fill="#fff" /></svg>
        </TaskButton>
        <SearchBox>
            <svg width="17" height="17" viewBox="0 0 17 17"><circle cx="10.500" cy="6.500" r="5.500" fill="none" stroke="#222" strokeWidth="1.300" /><path d="M6.500 10.500L.500 16.500" stroke="#222" strokeWidth="1.300" /></svg>
            <input aria-label="Search" placeholder="Type here to search" />
            <Flowers />
        </SearchBox>
        <TaskButton className="view" aria-label="Task view">
            <svg width="17" height="17" viewBox="0 0 17 17"><path d="M1.500.500v3h9v-3M1.500 16.500v-3h9v3M1.500 5.500h9v6h-9zM14.500 1v3M14.500 8v8" fill="none" stroke="#fff" strokeWidth="1.200" /><rect x="13" y="4.500" width="3" height="3" fill="#fff" /></svg>
        </TaskButton>
        <TaskButton aria-label="Edge">
            <svg width="25" height="25" viewBox="0 0 24 24">
                <circle cx="12" cy="12" r="12" fill="#1b6fc8" />
                <path d="M0 11C1 4 6 0 12 0c7 0 12 5 12 11 0 4-3 6-6 6-4 0-4-2-3-3 2-3-1-7-5-7-5 0-9 2-10 4z" fill="#3cc8c0" />
                <path d="M12 0c7 0 12 5 12 11 0 4-3 6-6 6-4 0-4-2-3-3 3-5 0-9-5-10z" fill="#58d47c" />
                <path d="M0 11c1-4 5-6 9-6 5 0 8 4 7 7-1-3-7-3-8 2-1 6 4 9 9 7-8 5-18 1-17-10z" fill="#2498e0" />
                <path d="M8 14c0 6 7 9 14 4-3 5-8 6-11 6-6-2-7-9-3-13z" fill="#10448c" />
                <path d="M10 12q3-3 5 0-1 2 0 4 3 2 7 1-6 5-11 0-2-3-1-5z" fill="#0b1c34" />
            </svg>
        </TaskButton>
        <TaskButton className="open" aria-label="File Explorer">
            <svg width="22" height="20" viewBox="0 0 22 20"><path d="M0 1h7l2 2h13v16H0z" fill="#e9a825" /><path d="M0 5h22v14H0z" fill="#ffd76a" /><path d="M4 19v-7q0-2 2-2h10q2 0 2 2v7h-4v-4H8v4z" fill="#3e8fd4" /></svg>
        </TaskButton>
        <TaskButton aria-label="Firefox"><Art size={23}><FirefoxShape /></Art></TaskButton>
        <TaskButton className="open" aria-label="WinRAR"><RarIcon size={24} /></TaskButton>
        <TaskButton $active aria-label="No Escape">
            <svg width="24" height="24" viewBox="0 0 24 24">
                <path d="M2 12h11v10H2z" fill="#ee1616" stroke="#000" />
                <path d="M2 12l4-4h11l-4 4z" fill="#1c28d8" stroke="#000" />
                <path d="M13 12l4-4v9l-4 5z" fill="#18c030" stroke="#000" />
                <path d="M8 8L6 4" stroke="#000" strokeWidth="1.500" />
                <path d="M0 3l4-3 4 1v3l-4 1zM18 12l2 2 2-3v6l-3 1z" fill="#f8ec6c" />
            </svg>
        </TaskButton>
        <Tray>
            <button aria-label="Show hidden icons">
                <svg width="14" height="16" viewBox="0 0 14 16"><path d="M1.500 11L7 5.500l5.500 5.500" fill="none" stroke="#fff" strokeWidth="1.300" /></svg>
            </button>
            <button aria-label="Meet now">
                <svg width="16" height="16" viewBox="0 0 16 16"><rect x="3.500" y="4.500" width="7" height="7" rx="1.500" fill="none" stroke="#fff" strokeWidth="1.200" /><path d="M10.500 7l3-2v6l-3-2M4 2q4-2.500 8 0M4 14q4 2.500 8 0" fill="none" stroke="#fff" strokeWidth="1.200" /></svg>
            </button>
            <button aria-label="Network">
                <svg width="17" height="16" viewBox="0 0 17 16"><path d="M6 3.500h10v8H4V8M10 11.500v3M6 14.500h7M.500 1.500h4v3h-4zM2.500 4.500v3h2" fill="none" stroke="#fff" strokeWidth="1.200" /></svg>
            </button>
            <button aria-label="Volume">
                <svg width="17" height="16" viewBox="0 0 17 16"><path d="M1 6h2.500L7 3v10L3.500 10H1z" fill="none" stroke="#fff" strokeWidth="1.200" /><path d="M9.500 6q1.500 2 0 4M11.500 4q3 4 0 8M13.500 2q4.500 6 0 12" fill="none" stroke="#fff" strokeWidth="1.200" /></svg>
            </button>
            <time>5:02 PM<br />9/3/2025</time>
            <Note className="notes" aria-label="Notifications">
                <svg width="16" height="18" viewBox="0 0 16 18"><path d="M0 1h16v12H8l-4 4v-4H0z" fill="#fff" /><path d="M3 4.500h10M3 7h10M3 9.500h7" stroke="#0a1824" /></svg>
                <span>1</span>
            </Note>
            <div className="edge" />
        </Tray>
    </Taskbar>
)

const App = () => {
    return (
        <Screen>
            <GlobalStyle />
            <Desktop>
                <Shortcuts>
                    {shortcuts.map((s, i) => (
                        <ShortcutBox key={i} $col={s.col} $row={s.row}>
                            <s.art />
                            <span className={s.two ? 'two' : ''}>{s.label}</span>
                        </ShortcutBox>
                    ))}
                </Shortcuts>
                <AnyRun />
                <ExplorerWindow />
                <ArchiveWindow />
                <MessageBox />
            </Desktop>
            <TaskbarRow />
        </Screen>
    )
}

export default App;
